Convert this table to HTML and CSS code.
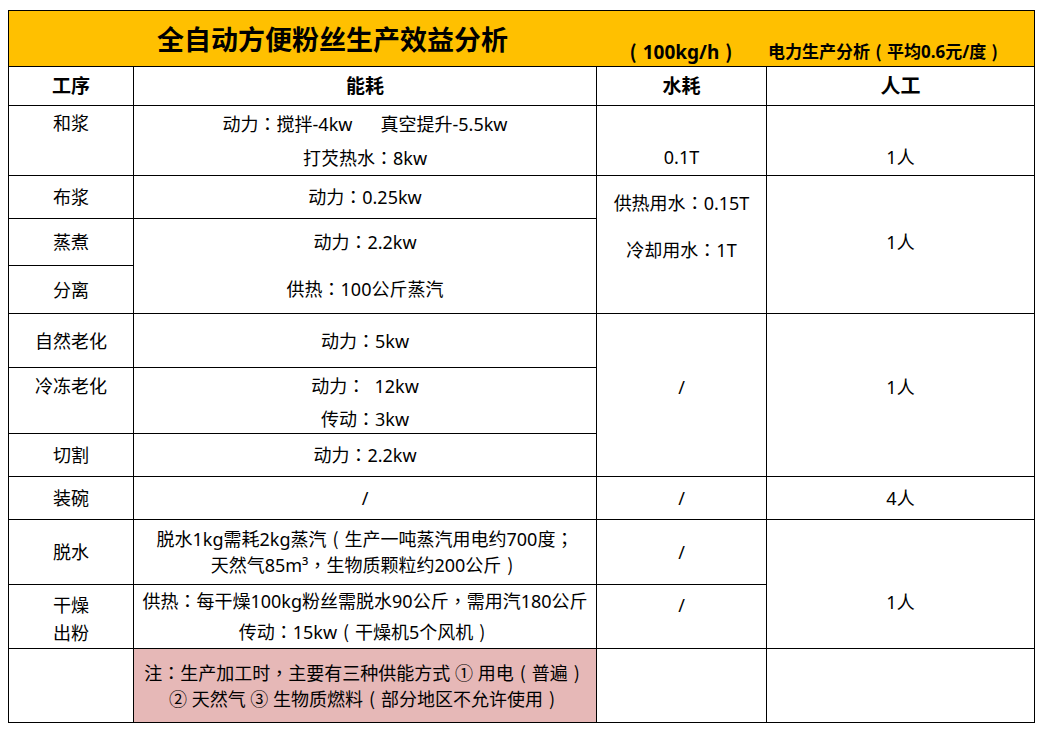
FILE: index.html
```html
<!DOCTYPE html>
<html lang="zh-CN">
<head>
<meta charset="utf-8">
<title>全自动方便粉丝生产效益分析</title>
<link rel="stylesheet" href="styles.css">
</head>
<body>
<div class="sheet">
  <div class="cell title-cell">
    <div class="title">全自动方便粉丝生产效益分析</div>
    <div class="sub sub-rate"><span class="par">(</span>100kg/h<span class="par">)</span></div>
    <div class="sub sub-power">电力生产分析<span class="par">(</span>平均0.6元/度<span class="par">)</span></div>
  </div>

  <div class="cell head">工序</div>
  <div class="cell head">能耗</div>
  <div class="cell head">水耗</div>
  <div class="cell head head-big">人工</div>

  <div class="cell start pt5">和浆</div>
  <div class="cell lh34">
    <div>动力<span class="pc" lang="zh-TW">：</span>搅拌-4kw&nbsp;&nbsp;&nbsp;&nbsp;&nbsp;&nbsp;真空提升-5.5kw</div>
    <div>打芡热水<span class="pc" lang="zh-TW">：</span>8kw</div>
  </div>
  <div class="cell end pb6">0.1T</div>
  <div class="cell end pb6">1人</div>

  <div class="cell">布浆</div>
  <div class="cell"><div>动力<span class="pc" lang="zh-TW">：</span>0.25kw</div></div>
  <div class="cell span3 start pt4 lh47">
    <div>供热用水<span class="pc" lang="zh-TW">：</span>0.15T</div>
    <div>冷却用水<span class="pc" lang="zh-TW">：</span>1T</div>
  </div>
  <div class="cell span3 pb6">1人</div>

  <div class="cell">蒸煮</div>
  <div class="cell span2 lh47">
    <div>动力<span class="pc" lang="zh-TW">：</span>2.2kw</div>
    <div>供热<span class="pc" lang="zh-TW">：</span>100公斤蒸汽</div>
  </div>

  <div class="cell">分离</div>

  <div class="cell">自然老化</div>
  <div class="cell"><div>动力<span class="pc" lang="zh-TW">：</span>5kw</div></div>
  <div class="cell span3 pb17">/</div>
  <div class="cell span3 pb17">1人</div>

  <div class="cell start pt6">冷冻老化</div>
  <div class="cell start pt2 lh33">
    <div>动力<span class="pc" lang="zh-TW">：</span>&nbsp; 12kw</div>
    <div>传动<span class="pc" lang="zh-TW">：</span>3kw</div>
  </div>

  <div class="cell">切割</div>
  <div class="cell"><div>动力<span class="pc" lang="zh-TW">：</span>2.2kw</div></div>

  <div class="cell">装碗</div>
  <div class="cell">/</div>
  <div class="cell">/</div>
  <div class="cell">4人</div>

  <div class="cell">脱水</div>
  <div class="cell lh26">
    <div>脱水1kg需耗2kg蒸汽<span class="par">(</span>生产一吨蒸汽用电约700度<span class="pc" lang="zh-TW">；</span></div>
    <div>天然气85m³<span class="pc" lang="zh-TW">，</span>生物质颗粒约200公斤<span class="par">)</span></div>
  </div>
  <div class="cell">/</div>
  <div class="cell span2 pt35">1人</div>

  <div class="cell lh28 pt4">
    <div>干燥</div>
    <div>出粉</div>
  </div>
  <div class="cell lh31">
    <div>供热<span class="pc" lang="zh-TW">：</span>每干燥100kg粉丝需脱水90公斤<span class="pc" lang="zh-TW">，</span>需用汽180公斤</div>
    <div>传动<span class="pc" lang="zh-TW">：</span>15kw<span class="par">(</span>干燥机5个风机<span class="par">)</span></div>
  </div>
  <div class="cell start pt8">/</div>

  <div class="cell"></div>
  <div class="cell note lh26">
    <div>注<span class="pc" lang="zh-TW">：</span>生产加工时<span class="pc" lang="zh-TW">，</span>主要有三种供能方式 ① 用电<span class="par">(</span>普遍<span class="par">)</span></div>
    <div>② 天然气 ③ 生物质燃料<span class="par">(</span>部分地区不允许使用<span class="par">)</span></div>
  </div>
  <div class="cell"></div>
  <div class="cell"></div>
</div>
</body>
</html>
```

FILE: styles.css
```css
html, body {
  margin: 0;
  padding: 0;
  background: #ffffff;
}

body {
  font-family: "Noto Sans", "Noto Sans CJK SC", sans-serif;
  color: #000000;
  padding: 10px 0 0 8px;
}

.sheet {
  display: grid;
  grid-template-columns: 125px 463px 170px 268px;
  grid-template-rows: 56px 39px 70px 43px 47px 48px 54px 66px 43px 43px 65px 64px 74px;
  width: max-content;
  border-top: 1px solid #000000;
  border-left: 1px solid #000000;
  font-size: 18px;
  line-height: 24px;
}

.cell {
  box-sizing: border-box;
  border-right: 1px solid #000000;
  border-bottom: 1px solid #000000;
  display: flex;
  flex-direction: column;
  justify-content: center;
  align-items: center;
  text-align: center;
  white-space: nowrap;
  padding: 0 2px;
  min-width: 0;
}

.span2 { grid-row: span 2; }
.span3 { grid-row: span 3; }

.start { justify-content: flex-start; }
.end { justify-content: flex-end; }

.pc {
  font-family: "Noto Sans CJK TC", "Noto Sans CJK SC", sans-serif;
  line-height: 1;
}

.par {
  display: inline-block;
  width: 1em;
  text-align: center;
  font-family: "Noto Sans CJK SC", sans-serif;
  line-height: 1;
}

.pt2 { padding-top: 2px; }
.pt4 { padding-top: 4px; }
.pt5 { padding-top: 5px; }
.pt6 { padding-top: 6px; }
.pt8 { padding-top: 8px; }
.pt35 { padding-top: 35px; }
.pb6 { padding-bottom: 6px; }
.pb17 { padding-bottom: 17px; }

.lh26 { line-height: 26px; }
.lh28 { line-height: 28px; }
.lh31 { line-height: 31px; }
.lh33 { line-height: 33px; }
.lh34 { line-height: 34px; }
.lh47 { line-height: 47px; }

/* title bar */
.title-cell {
  grid-column: 1 / -1;
  background: #ffc000;
  flex-direction: row;
  justify-content: flex-start;
  align-items: flex-end;
  padding: 0;
}

.title {
  width: 587px;
  box-sizing: border-box;
  padding-left: 148px;
  align-self: center;
  padding-top: 3px;
  font-size: 27px;
  line-height: 34px;
  font-weight: 700;
  text-align: left;
}

.sub {
  font-weight: 700;
  padding-bottom: 2px;
  line-height: 24px;
}

.sub-rate {
  width: 170px;
  text-align: center;
  font-size: 19px;
}

.sub-power {
  padding-left: 2px;
  font-size: 17px;
}

/* header row */
.head {
  font-size: 19px;
  font-weight: 700;
}

.head-big {
  font-size: 20px;
}

.note {
  background: #e6b8b7;
}
```
